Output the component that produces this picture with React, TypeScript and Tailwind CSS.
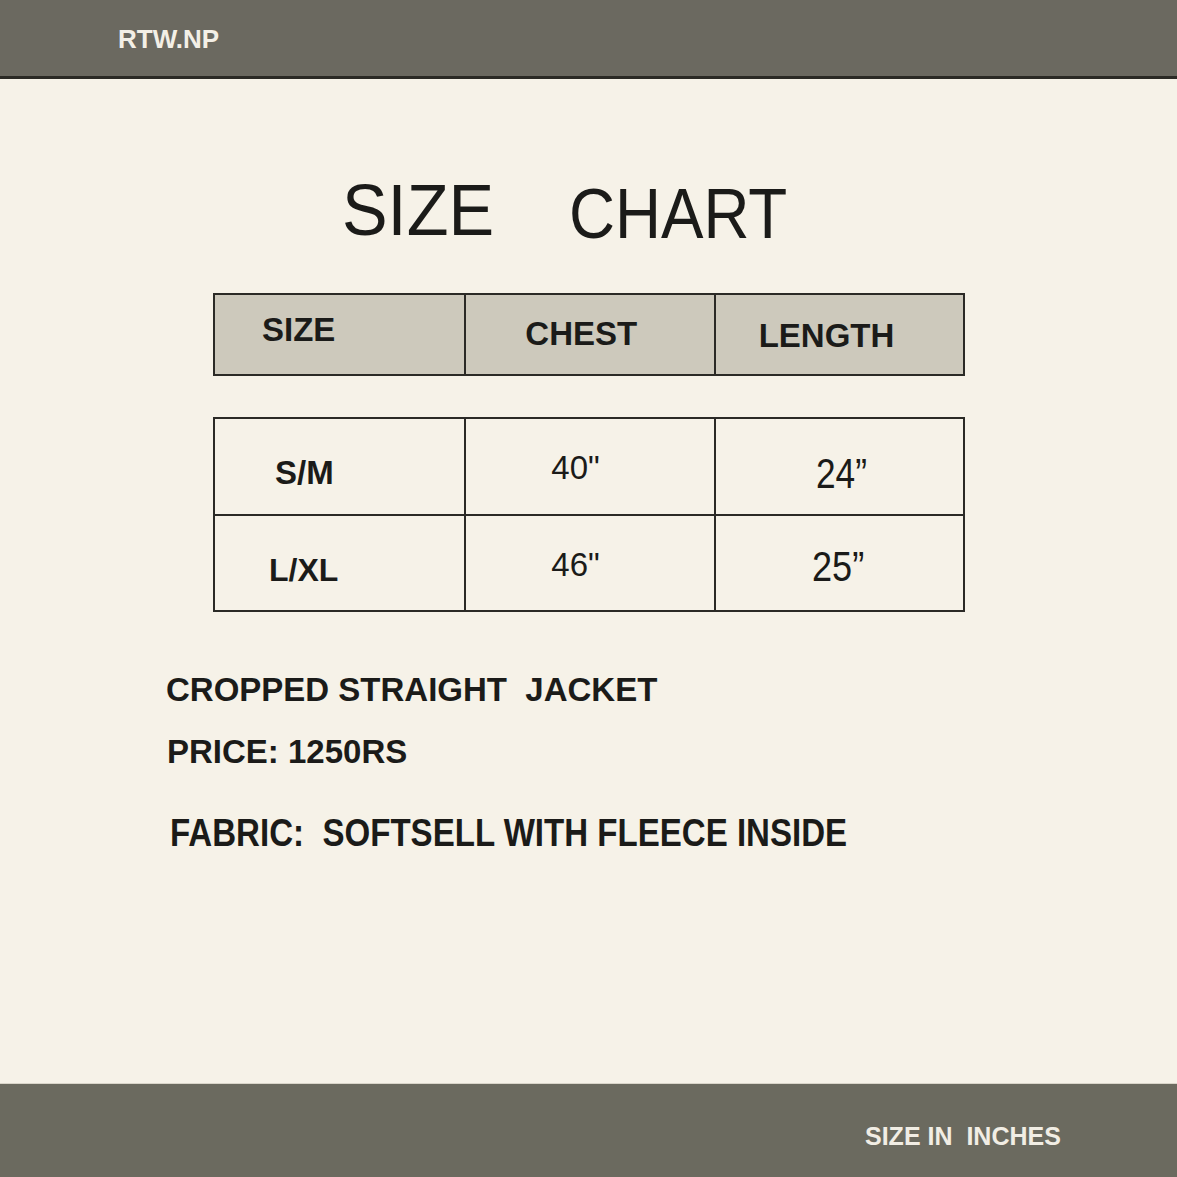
import React from "react";

export default function App() {
  return (
    <div className="flex h-[1177px] w-[1177px] flex-col overflow-hidden bg-[#f6f2e8] font-['Liberation_Sans',Arial,sans-serif] text-[#1b1b19]">
      {/* top bar */}
      <div className="h-[79px] shrink-0 border-b-[3px] border-[#2b2a25] bg-[#6b6960]">
        <div className="pl-[118px] pt-[26px] text-[26px] font-bold leading-none text-[#f3efe6]">
          RTW.NP
        </div>
      </div>

      {/* main */}
      <div className="flex-1">
        {/* title */}
        <div className="flex items-start pl-[342px] pt-[95px]">
          <div className="w-[152px] whitespace-nowrap">
            <span className="inline-block origin-left scale-x-[0.95] text-[72px] leading-none">SIZE</span>
          </div>
          <div className="ml-[75px] mt-[5px] whitespace-nowrap">
            <span className="inline-block origin-left scale-x-[0.91] text-[70px] leading-none">CHART</span>
          </div>
        </div>

        {/* header table */}
        <div className="ml-[213px] mt-[44px] grid h-[83px] w-[752px] grid-cols-3 border-2 border-[#2b2a26] bg-[#cdc9bc] font-bold leading-none">
          <div className="pl-[47px] pt-[18px] text-[33px]">SIZE</div>
          <div className="border-l-2 border-[#2b2a26] pl-[59px] pt-[22px] text-[33px]">CHEST</div>
          <div className="border-l-2 border-[#2b2a26] pl-[43px] pt-[24px] text-[33px]">LENGTH</div>
        </div>

        {/* data table */}
        <div className="ml-[213px] mt-[41px] w-[752px] border-2 border-[#2b2a26] leading-none">
          <div className="grid h-[95px] grid-cols-3">
            <div className="pl-[60px] pt-[37px] text-[33px] font-bold">S/M</div>
            <div className="border-l-2 border-[#2b2a26] pl-[85px] pt-[32px] text-[33px]">40"</div>
            <div className="border-l-2 border-[#2b2a26] pl-[100px] pt-[34px]">
              <span className="inline-block origin-left scale-x-[0.84] whitespace-nowrap text-[42px]">24”</span>
            </div>
          </div>
          <div className="grid h-[96px] grid-cols-3 border-t-2 border-[#2b2a26]">
            <div className="pl-[54px] pt-[38px] text-[32px] font-bold">L/XL</div>
            <div className="border-l-2 border-[#2b2a26] pl-[85px] pt-[32px] text-[33px]">46"</div>
            <div className="border-l-2 border-[#2b2a26] pl-[96px] pt-[30px]">
              <span className="inline-block origin-left scale-x-[0.86] whitespace-nowrap text-[42px]">25”</span>
            </div>
          </div>
        </div>

        {/* details */}
        <div className="flex flex-col font-bold leading-none">
          <div className="ml-[166px] mt-[61px] whitespace-pre text-[33px]">CROPPED STRAIGHT  JACKET</div>
          <div className="ml-[167px] mt-[29px] whitespace-pre text-[33px]">PRICE: 1250RS</div>
          <div className="ml-[170px] mt-[46px] whitespace-pre">
            <span className="inline-block origin-left scale-x-[0.87] text-[38px]">FABRIC:  SOFTSELL WITH FLEECE INSIDE</span>
          </div>
        </div>
      </div>

      {/* bottom bar */}
      <div className="h-[94px] shrink-0 border-t border-[#d9d5c9] bg-[#6b6a5f]">
        <div className="whitespace-pre pl-[865px] pt-[40px] text-[25px] font-bold leading-none text-[#f1ede4]">
          SIZE IN  INCHES
        </div>
      </div>
    </div>
  );
}
